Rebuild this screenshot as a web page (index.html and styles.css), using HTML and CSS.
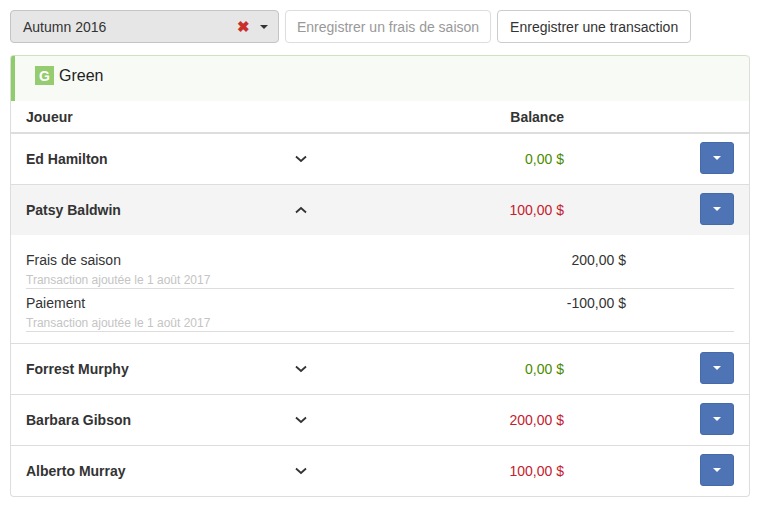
FILE: index.html
```html
<!DOCTYPE html>
<html>
<head>
<meta charset="utf-8">
<link rel="stylesheet" href="styles.css">
</head>
<body>
<div class="toolbar">
  <div class="select">
    <span class="select-value">Autumn 2016</span>
    <span class="select-clear">&#10006;</span>
    <span class="caret dark"></span>
  </div>
  <button class="btn disabled">Enregistrer un frais de saison</button>
  <button class="btn">Enregistrer une transaction</button>
</div>

<div class="panel">
  <div class="panel-head">
    <span class="badge">G</span>
    <span class="team">Green</span>
  </div>
  <div class="row head-row">
    <div class="c-name">Joueur</div>
    <div class="c-chev"></div>
    <div class="c-bal">Balance</div>
    <div class="c-act"></div>
  </div>

  <div class="row">
    <div class="c-name">Ed Hamilton</div>
    <div class="c-chev"><svg width="12" height="8" viewBox="0 0 12 8"><polyline points="1,1.5 6,6 11,1.5" fill="none" stroke="#333" stroke-width="1.8"/></svg></div>
    <div class="c-bal pos">0,00 $</div>
    <div class="c-act"><span class="act-btn"><span class="caret"></span></span></div>
  </div>

  <div class="row open">
    <div class="c-name">Patsy Baldwin</div>
    <div class="c-chev"><svg width="12" height="8" viewBox="0 0 12 8"><polyline points="1,6.5 6,2 11,6.5" fill="none" stroke="#333" stroke-width="1.8"/></svg></div>
    <div class="c-bal neg">100,00 $</div>
    <div class="c-act"><span class="act-btn"><span class="caret"></span></span></div>
  </div>
  <div class="details">
    <div class="item">
      <div class="item-top"><span>Frais de saison</span><span class="amt">200,00 $</span></div>
      <div class="item-sub">Transaction ajoutée le 1 août 2017</div>
    </div>
    <div class="item">
      <div class="item-top"><span>Paiement</span><span class="amt">-100,00 $</span></div>
      <div class="item-sub">Transaction ajoutée le 1 août 2017</div>
    </div>
  </div>

  <div class="row">
    <div class="c-name">Forrest Murphy</div>
    <div class="c-chev"><svg width="12" height="8" viewBox="0 0 12 8"><polyline points="1,1.5 6,6 11,1.5" fill="none" stroke="#333" stroke-width="1.8"/></svg></div>
    <div class="c-bal pos">0,00 $</div>
    <div class="c-act"><span class="act-btn"><span class="caret"></span></span></div>
  </div>
  <div class="row">
    <div class="c-name">Barbara Gibson</div>
    <div class="c-chev"><svg width="12" height="8" viewBox="0 0 12 8"><polyline points="1,1.5 6,6 11,1.5" fill="none" stroke="#333" stroke-width="1.8"/></svg></div>
    <div class="c-bal neg">200,00 $</div>
    <div class="c-act"><span class="act-btn"><span class="caret"></span></span></div>
  </div>
  <div class="row">
    <div class="c-name">Alberto Murray</div>
    <div class="c-chev"><svg width="12" height="8" viewBox="0 0 12 8"><polyline points="1,1.5 6,6 11,1.5" fill="none" stroke="#333" stroke-width="1.8"/></svg></div>
    <div class="c-bal neg">100,00 $</div>
    <div class="c-act"><span class="act-btn"><span class="caret"></span></span></div>
  </div>
</div>
</body>
</html>
```

FILE: styles.css
```css
* { box-sizing: border-box; }
body {
  margin: 0;
  padding: 10px;
  font-family: "Liberation Sans", Arial, sans-serif;
  font-size: 14px;
  color: #333;
  background: #fff;
}
.toolbar {
  display: flex;
  gap: 6px;
  height: 33px;
}
.select {
  width: 269px;
  display: flex;
  align-items: center;
  background: #e6e6e6;
  border: 1px solid #c4c4c4;
  border-radius: 4px;
  padding: 0 10px 0 12px;
}
.select-value { flex: 1; color: #333; }
.select-clear {
  color: #c9302c;
  font-size: 15px;
  font-weight: bold;
  margin-right: 10px;
}
.caret {
  display: inline-block;
  width: 0; height: 0;
  border-left: 4px solid transparent;
  border-right: 4px solid transparent;
  border-top: 4px solid #fff;
}
.caret.dark { border-top-color: #333; }
.btn {
  font-family: inherit;
  font-size: 14px;
  color: #333;
  background: #fff;
  border: 1px solid #ccc;
  border-radius: 4px;
  padding: 0 12px;
  height: 33px;
}
.btn.disabled { color: #999; border-color: #ddd; padding: 0 11px; }

.panel {
  margin-top: 12px;
  width: 740px;
  border: 1px solid #ddd;
  border-top: none;
  border-radius: 4px;
  overflow: hidden;
}
.panel-head {
  height: 46px;
  display: flex;
  align-items: flex-start;
  padding-top: 10px;
  background: #f7faf5;
  border-top: 1px solid #cfe3c0;
  border-left: 5px solid #8fcc6a;
  border-radius: 4px 4px 0 0;
  padding-left: 20px;
  margin-left: -1px;
}
.badge {
  width: 19px; height: 19px;
  background: #95cc70;
  color: #fff;
  font-weight: bold;
  font-size: 14px;
  display: flex;
  align-items: center;
  justify-content: center;
  margin-right: 5px;
}
.team { font-size: 16px; line-height: 19px; color: #222; }

.row {
  display: grid;
  grid-template-columns: 255px 40px 243px 1fr;
  align-items: center;
  height: 51px;
  padding: 0 15px;
  border-top: 1px solid #ddd;
  font-weight: bold;
}
.head-row {
  height: 33px;
  border-top: none;
  border-bottom: 2px solid #ddd;
}
.head-row + .row { border-top: none; height: 50px; }
.row.open { background: #f4f4f4; }
.c-chev { display: flex; justify-content: center; }
.c-bal { text-align: right; }
.c-bal.pos, .c-bal.neg { font-weight: normal; }
.pos { color: #4b8a00; }
.neg { color: #c4202e; }
.c-act { display: flex; justify-content: flex-end; }
.act-btn {
  width: 34px; height: 32px;
  margin-bottom: 3px;
  background: #4f74b5;
  border: 1px solid #466aa8;
  border-radius: 3px;
  display: flex;
  align-items: center;
  justify-content: center;
}

.details {
  padding: 11px 15px;
}
.item {
  padding-top: 4px;
  border-bottom: 1px solid #ddd;
}
.item-top {
  display: grid;
  grid-template-columns: 1fr auto;
  line-height: 20px;
  width: 600px;
}
.item-sub {
  margin-top: 2px;
  font-size: 12px;
  line-height: 16px;
  color: #c4c4c4;
}
```
